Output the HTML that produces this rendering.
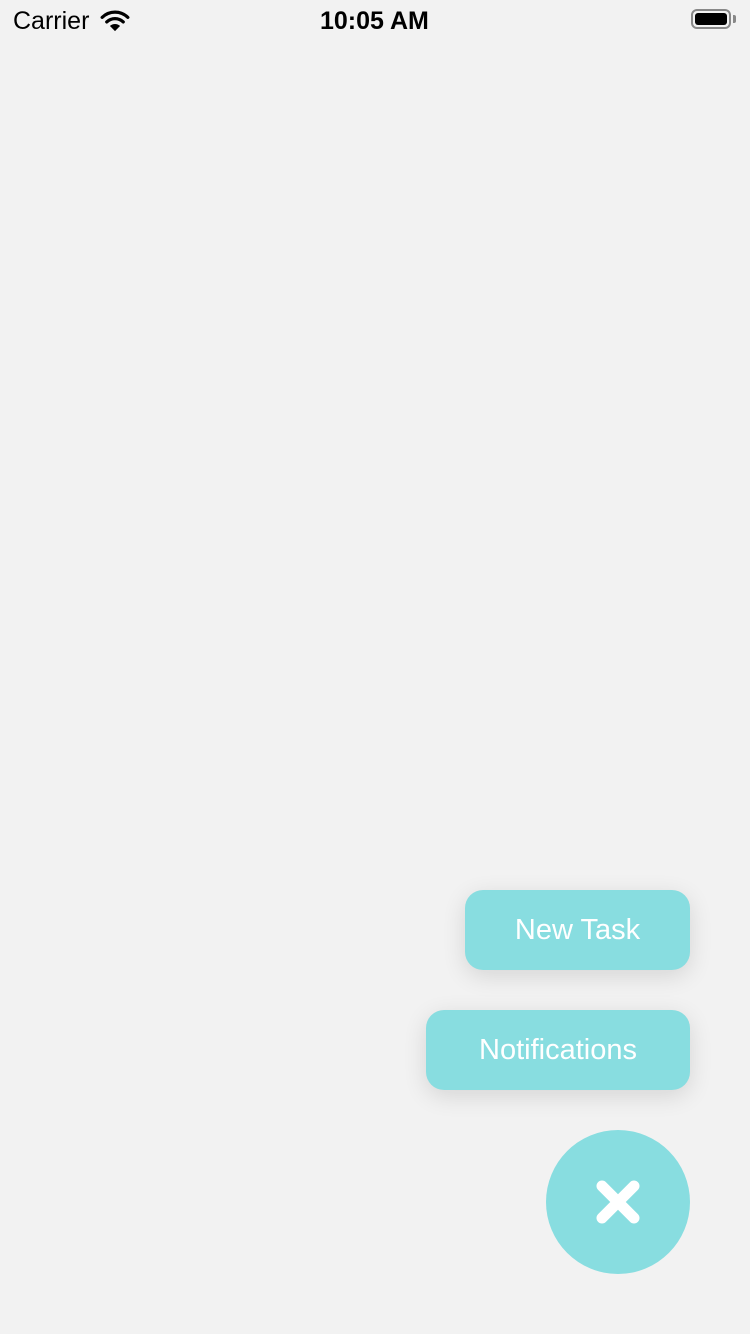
<!DOCTYPE html>
<html><head><meta charset="utf-8"><style>
body{margin:0;width:750px;height:1334px;background:#f2f2f2;position:relative;overflow:hidden;font-family:"Liberation Sans",sans-serif}
.t{position:absolute;top:7px;font-size:25px;color:#000}
.b{position:absolute;background:#88dde0;color:#fff;font-size:29px;border-radius:18px;height:80px;line-height:80px;text-align:center;box-shadow:0 6px 24px rgba(0,0,0,0.12)}
</style></head><body>
<div class="t" style="left:13px">Carrier</div>
<svg style="position:absolute;left:100px;top:10px" width="30" height="22" viewBox="0 0 32 24"><path d="M2 8 A20 20 0 0 1 30 8" stroke="#000" stroke-width="3.5" fill="none" stroke-linecap="round"/><path d="M7 13 A13 13 0 0 1 25 13" stroke="#000" stroke-width="3.5" fill="none" stroke-linecap="round"/><path d="M16 23 L10.5 17.5 A8 8 0 0 1 21.5 17.5 Z" fill="#000"/></svg>
<div class="t" style="left:320px;font-weight:bold">10:05 AM</div>
<div style="position:absolute;left:691px;top:9px;width:40px;height:20px;border:2px solid #888;border-radius:6px;box-sizing:border-box"><div style="position:absolute;left:2px;top:2px;right:2px;bottom:2px;background:#000;border-radius:3px"></div></div>
<div style="position:absolute;left:733px;top:15px;width:3px;height:8px;background:#888;border-radius:0 2px 2px 0"></div>
<div class="b" style="left:465px;top:890px;width:225px">New Task</div>
<div class="b" style="left:426px;top:1010px;width:264px">Notifications</div>
<div style="position:absolute;left:546px;top:1130px;width:144px;height:144px;border-radius:50%;background:#88dde0"></div>
<svg style="position:absolute;left:594px;top:1178px" width="48" height="48" viewBox="0 0 48 48"><path d="M8 8 L40 40 M40 8 L8 40" stroke="#fff" stroke-width="11" stroke-linecap="round"/></svg>
</body></html>
